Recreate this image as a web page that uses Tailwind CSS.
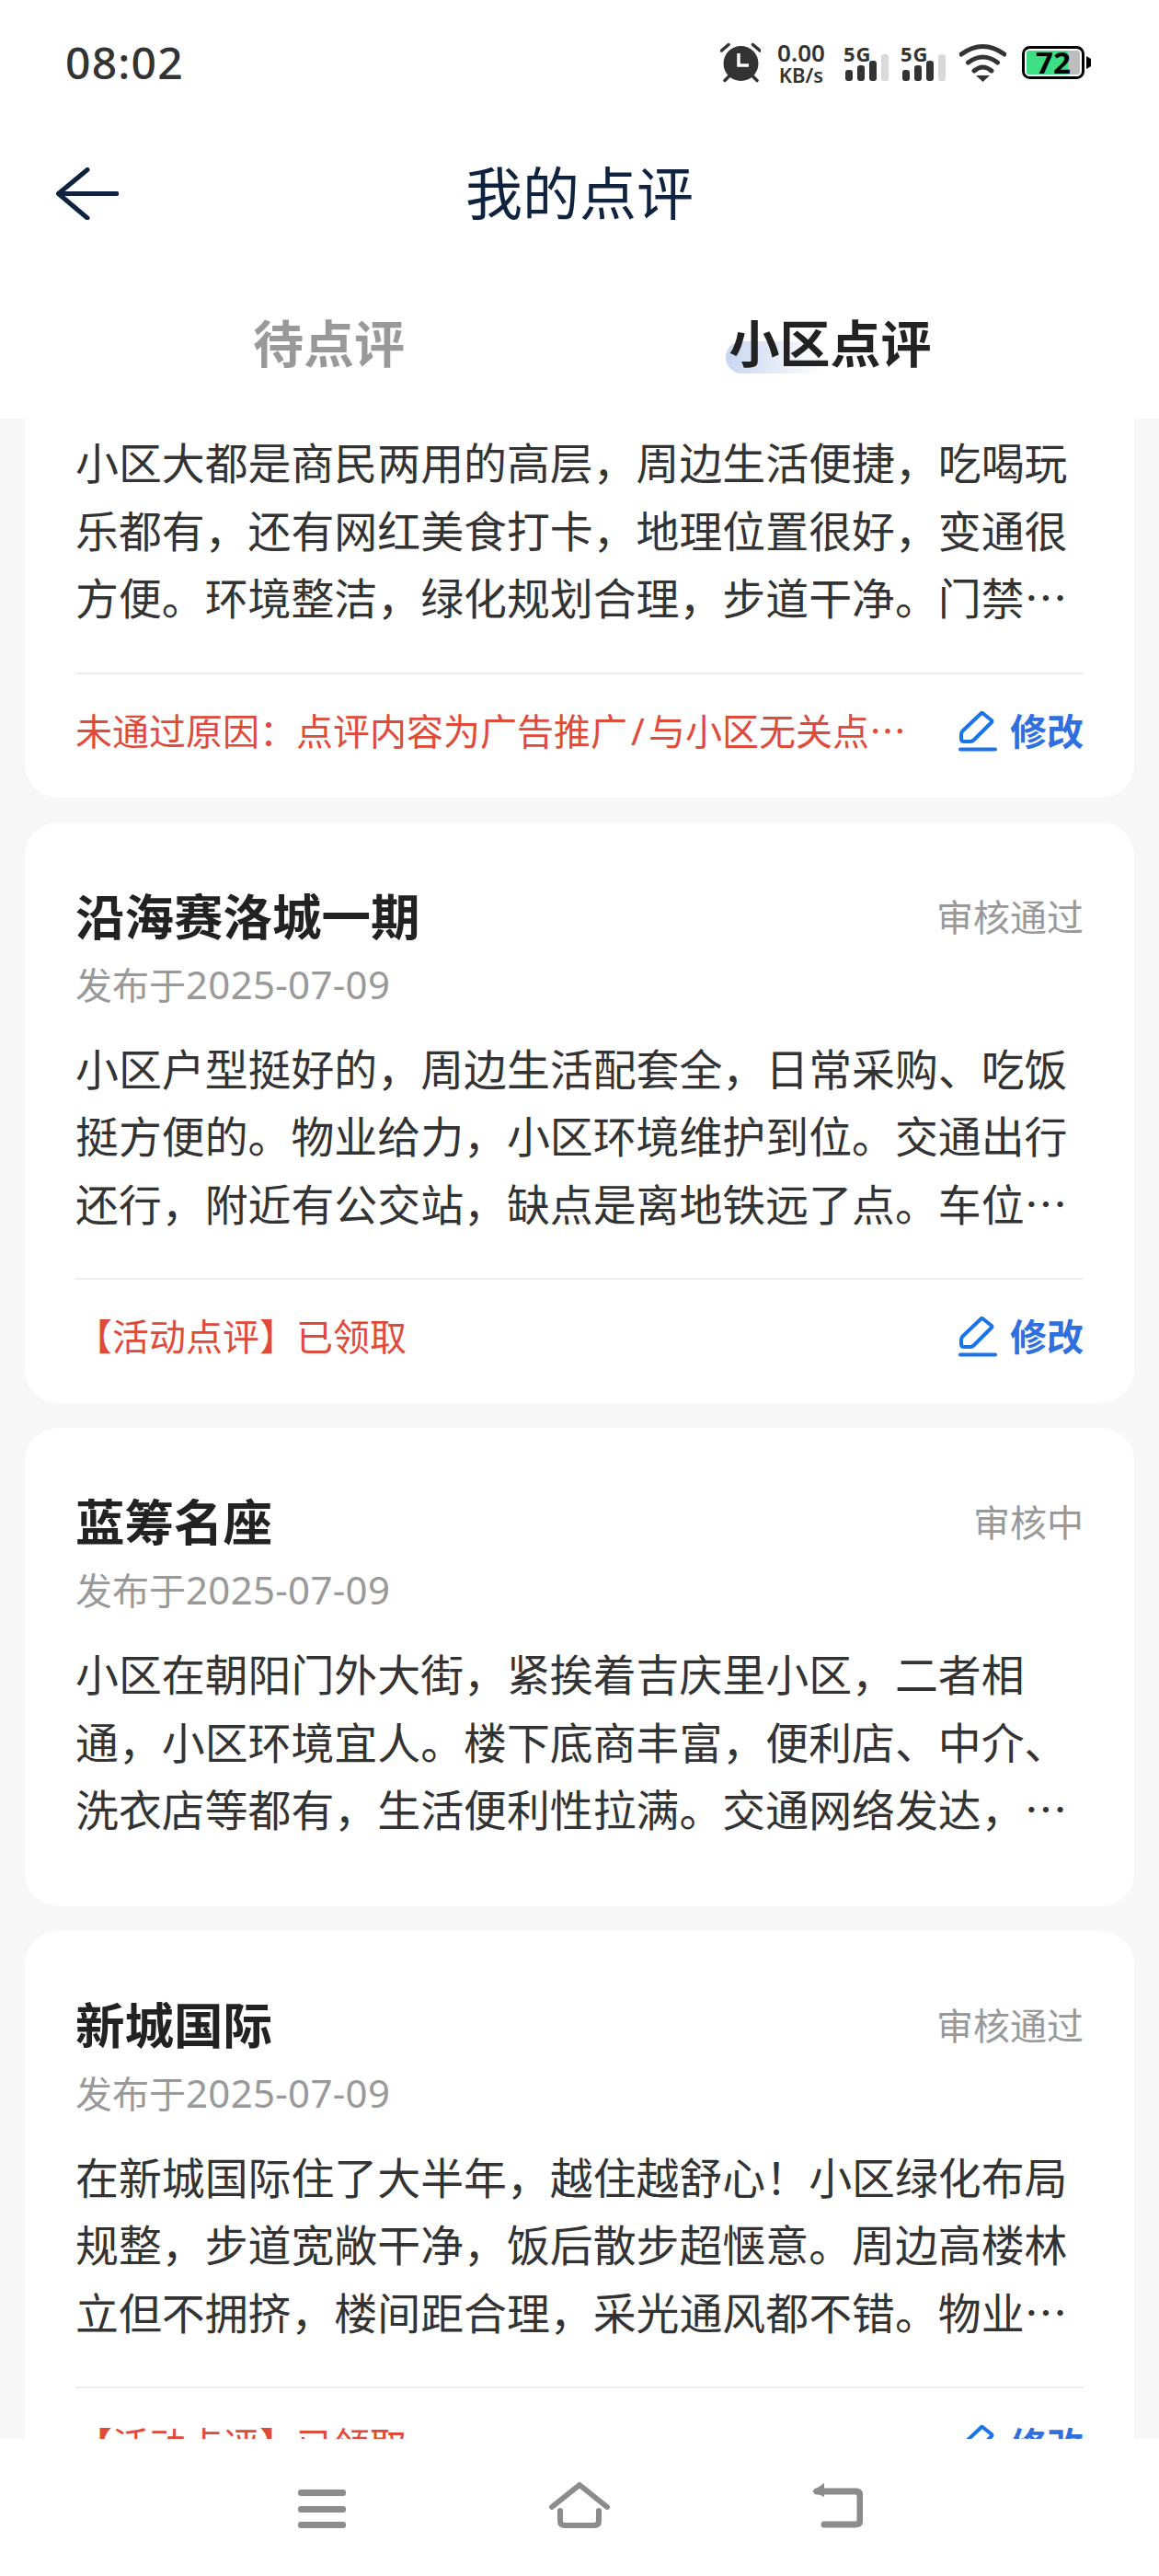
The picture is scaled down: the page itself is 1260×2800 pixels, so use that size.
<!doctype html>
<html lang="zh-CN">
<head>
<meta charset="utf-8">
<script src="https://cdn.jsdelivr.net/npm/@tailwindcss/browser@4"></script>
</head>
<body class="m-0 bg-white">
<div class="w-[1260px] h-[2800px] flex flex-col overflow-hidden bg-[#f7f7f7] font-['Noto_Sans','Noto_Sans_CJK_SC',sans-serif]">

  <header class="h-[455px] shrink-0 bg-white flex flex-col">
    <div class="h-[136px] flex items-center pl-[71px] pr-[74px]">
      <span class="text-[48px] leading-none font-medium text-[#333] tracking-[1.2px]">08:02</span>
      <div class="ml-auto flex items-center text-[#333]">
        <svg class="w-[44px] h-[44px]" viewBox="0 0 44 44" fill="none"><circle cx="22.5" cy="23" r="19" fill="#333"/><path d="M20 12V25H31" stroke="#fff" stroke-width="3.5"/><path d="M1.5 9L9 2.5M43 9L35.5 2.5M5 41.5L9.5 37M40 41.5L35.5 37" stroke="#333" stroke-width="3.5" stroke-linecap="round"/></svg>
        <div class="ml-[18px] w-[52px] flex flex-col items-center font-semibold">
          <span class="text-[26px] leading-[26px]">0.00</span>
          <span class="text-[22px] leading-[22px]">KB/s</span>
        </div>
        <div class="relative ml-[20px] w-[49px] h-[42px]">
          <span class="absolute left-0 top-0 text-[22px] leading-[22px] font-bold tracking-[1px]">5G</span>
          <svg class="w-[49px] h-[42px]" viewBox="0 0 49 42"><rect x="2" y="29" width="8" height="12" rx="3" fill="#333"/><rect x="15" y="24" width="8" height="17" rx="3" fill="#333"/><rect x="28" y="19" width="8" height="22" rx="3" fill="#333"/><rect x="41" y="12" width="8" height="29" rx="3" fill="#d9d9d9"/></svg>
        </div>
        <div class="relative ml-[13px] w-[49px] h-[42px]">
          <span class="absolute left-0 top-0 text-[22px] leading-[22px] font-bold tracking-[1px]">5G</span>
          <svg class="w-[49px] h-[42px]" viewBox="0 0 49 42"><rect x="2" y="29" width="8" height="12" rx="3" fill="#333"/><rect x="15" y="24" width="8" height="17" rx="3" fill="#333"/><rect x="28" y="19" width="8" height="22" rx="3" fill="#333"/><rect x="41" y="12" width="8" height="29" rx="3" fill="#d9d9d9"/></svg>
        </div>
        <svg class="ml-[15px] w-[51px] h-[42px]" viewBox="0 0 51 42" fill="none"><path d="M2 12Q25.500 -5 49 12M9.500 21Q25.500 9 41.500 21M16 30Q25.500 22 35 30" stroke="#333" stroke-width="5" stroke-linecap="round"/><path d="M18 35H33L25.500 42Z" fill="#333"/></svg>
        <div class="relative ml-[17px] w-[75px] h-[36px]">
          <svg class="w-[75px] h-[36px]" viewBox="0 0 75 36"><rect x="1.500" y="1.500" width="65" height="33" rx="7" fill="#fff" stroke="#000" stroke-width="3"/><path d="M5 8Q5 5 8 5H50V31H8Q5 31 5 28Z" fill="#3ddf85"/><path d="M50 5H60Q63 5 63 8V28Q63 31 60 31H50Z" fill="#bdbdbd"/><path d="M70 11L75 14V22L70 25Z" fill="#000"/></svg>
          <span class="absolute left-0 top-0 w-[68px] h-[36px] flex items-center justify-center text-[33px] leading-[36px] font-bold text-black">72</span>
        </div>
      </div>
    </div>
    <div class="h-[148px] grid grid-cols-[1fr_auto_1fr] items-center pl-[61px]">
      <svg class="w-[68px] h-[57px]" viewBox="0 0 68 57" fill="none"><path d="M34 2.500L2.500 28.500L34 55M3 28.500H66" stroke="#0f2240" stroke-width="5" stroke-linecap="round" stroke-linejoin="round"/></svg>
      <h1 class="text-[62px] leading-none font-normal text-[#0f2240] -ml-[61px]">我的点评</h1>
      <span></span>
    </div>
    <div class="h-[171px] grid grid-cols-2 px-[85px] pt-[5px]">
      <div class="flex items-center justify-center text-[55px] leading-none font-bold text-[#999]">待点评</div>
      <div class="flex items-center justify-center">
        <span class="relative text-[55px] leading-none font-bold text-[#222]">
          <span class="absolute left-[-3px] top-[26px] w-[106px] h-[35px] rounded-l-[18px] bg-linear-to-r from-[#c9d6f0] to-white"></span>
          <span class="relative">小区点评</span>
        </span>
      </div>
    </div>
  </header>

  <main class="flex-1 min-h-0 overflow-hidden flex flex-col gap-[27px] px-[27px]">
    <article class="shrink-0 bg-white rounded-b-[36px] pt-[12px] px-[55px] pb-[44px]">
      <p class="text-[46.900px] leading-[73.500px] text-[#333]">小区大都是商民两用的高层，周边生活便捷，吃喝玩乐都有，还有网红美食打卡，地理位置很好，变通很方便。环境整洁，绿化规划合理，步道干净。门禁<span class="font-['Noto_Sans_CJK_SC'] leading-none">…</span></p>
      <div class="mt-[43px] h-[2px] bg-[#eee]"></div>
      <div class="mt-[34px] h-[56px] flex items-center justify-between">
        <span class="text-[40px] leading-[56px] text-[#e04a3a]">未通过原因：点评内容为广告推广<span class="px-[4px]">/</span>与小区无关点<span class="font-['Noto_Sans_CJK_SC'] leading-none">…</span></span>
        <span class="flex items-center gap-[14px] text-[40px] leading-none font-bold text-[#2f6fe0]">
          <svg class="w-[42px] h-[44px]" viewBox="0 0 42 44" fill="none"><path d="M26 2L36 10Q37 11 36 12L17 31Q15 33 13 33H6Q3 33 3 30V25Q3 23 5 21L24 3Q25 1.500 26 2Z" stroke="#1a73e8" stroke-width="4" stroke-linejoin="round"/><path d="M2 41.500H40" stroke="#1a73e8" stroke-width="4" stroke-linecap="round"/></svg>修改</span>
      </div>
    </article>

    <article class="shrink-0 bg-white rounded-[36px] pt-[75px] px-[55px] pb-[44px]">
      <div class="h-[56px] flex items-center justify-between">
        <h2 class="text-[53.500px] leading-[56px] font-bold text-[#222]">沿海赛洛城一期</h2>
        <span class="text-[40px] leading-[56px] text-[#999]">审核通过</span>
      </div>
      <div class="mt-[18px] text-[40px] leading-[56px] text-[#999]">发布于<span class="text-[42px] leading-none tracking-[0.3px]">2025-07-09</span></div>
      <p class="mt-[27px] text-[46.900px] leading-[73.500px] text-[#333]">小区户型挺好的，周边生活配套全，日常采购、吃饭挺方便的。物业给力，小区环境维护到位。交通出行还行，附近有公交站，缺点是离地铁远了点。车位<span class="font-['Noto_Sans_CJK_SC'] leading-none">…</span></p>
      <div class="mt-[43px] h-[2px] bg-[#eee]"></div>
      <div class="mt-[34px] h-[56px] flex items-center justify-between">
        <span class="text-[40px] leading-[56px] text-[#e04a3a]">【活动点评】已领取</span>
        <span class="flex items-center gap-[14px] text-[40px] leading-none font-bold text-[#2f6fe0]">
          <svg class="w-[42px] h-[44px]" viewBox="0 0 42 44" fill="none"><path d="M26 2L36 10Q37 11 36 12L17 31Q15 33 13 33H6Q3 33 3 30V25Q3 23 5 21L24 3Q25 1.500 26 2Z" stroke="#1a73e8" stroke-width="4" stroke-linejoin="round"/><path d="M2 41.500H40" stroke="#1a73e8" stroke-width="4" stroke-linecap="round"/></svg>修改</span>
      </div>
    </article>

    <article class="shrink-0 bg-white rounded-[36px] pt-[75px] px-[55px] pb-[67px]">
      <div class="h-[56px] flex items-center justify-between">
        <h2 class="text-[53.500px] leading-[56px] font-bold text-[#222]">蓝筹名座</h2>
        <span class="text-[40px] leading-[56px] text-[#999]">审核中</span>
      </div>
      <div class="mt-[18px] text-[40px] leading-[56px] text-[#999]">发布于<span class="text-[42px] leading-none tracking-[0.3px]">2025-07-09</span></div>
      <p class="mt-[27px] text-[46.900px] leading-[73.500px] text-[#333]">小区在朝阳门外大街，紧挨着吉庆里小区，二者相通，小区环境宜人。楼下底商丰富，便利店、中介、洗衣店等都有，生活便利性拉满。交通网络发达，<span class="font-['Noto_Sans_CJK_SC'] leading-none">…</span></p>
    </article>

    <article class="shrink-0 bg-white rounded-[36px] pt-[75px] px-[55px] pb-[44px]">
      <div class="h-[56px] flex items-center justify-between">
        <h2 class="text-[53.500px] leading-[56px] font-bold text-[#222]">新城国际</h2>
        <span class="text-[40px] leading-[56px] text-[#999]">审核通过</span>
      </div>
      <div class="mt-[18px] text-[40px] leading-[56px] text-[#999]">发布于<span class="text-[42px] leading-none tracking-[0.3px]">2025-07-09</span></div>
      <p class="mt-[27px] text-[46.900px] leading-[73.500px] text-[#333]">在新城国际住了大半年，越住越舒心！小区绿化布局规整，步道宽敞干净，饭后散步超惬意。周边高楼林立但不拥挤，楼间距合理，采光通风都不错。物业<span class="font-['Noto_Sans_CJK_SC'] leading-none">…</span></p>
      <div class="mt-[43px] h-[2px] bg-[#eee]"></div>
      <div class="mt-[34px] h-[56px] flex items-center justify-between">
        <span class="text-[40px] leading-[56px] text-[#e04a3a]">【活动点评】已领取</span>
        <span class="flex items-center gap-[14px] text-[40px] leading-none font-bold text-[#2f6fe0]">
          <svg class="w-[42px] h-[44px]" viewBox="0 0 42 44" fill="none"><path d="M26 2L36 10Q37 11 36 12L17 31Q15 33 13 33H6Q3 33 3 30V25Q3 23 5 21L24 3Q25 1.500 26 2Z" stroke="#1a73e8" stroke-width="4" stroke-linejoin="round"/><path d="M2 41.500H40" stroke="#1a73e8" stroke-width="4" stroke-linecap="round"/></svg>修改</span>
      </div>
    </article>
  </main>

  <nav class="h-[149px] shrink-0 bg-white pt-[47px] px-[210px]">
    <div class="grid grid-cols-3 h-[50px] items-end justify-items-center">
      <div class="w-[52px] h-[42px] flex flex-col justify-between">
        <span class="block h-[7px] rounded-[3px] bg-[#8c8c8c]"></span>
        <span class="block h-[7px] rounded-[3px] bg-[#8c8c8c]"></span>
        <span class="block h-[7px] rounded-[3px] bg-[#8c8c8c]"></span>
      </div>
      <svg class="w-[66px] h-[50px]" viewBox="0 0 66 50" fill="none"><path d="M3 27L33 3L63 27" stroke="#8c8c8c" stroke-width="6" stroke-linecap="round" stroke-linejoin="round"/><path d="M12 31V42Q12 47 17 47H49Q54 47 54 42V31" stroke="#8c8c8c" stroke-width="6" stroke-linecap="round"/></svg>
      <svg class="w-[56px] h-[50px]" viewBox="0 0 56 50" fill="none"><path d="M6 10H48Q53 10 53 15V41Q53 46 48 46H14" stroke="#8c8c8c" stroke-width="7" stroke-linecap="round"/><path d="M14 1L1 10L14 16Z" fill="#8c8c8c"/></svg>
    </div>
  </nav>
</div>
</body>
</html>
